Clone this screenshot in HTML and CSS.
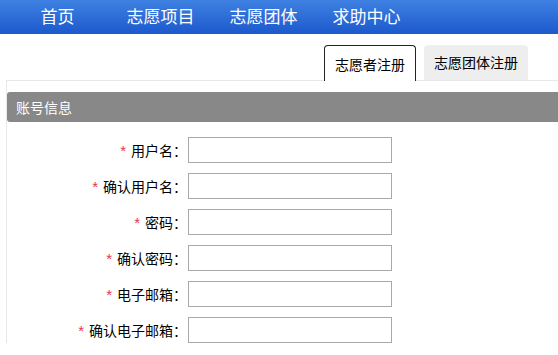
FILE: index.html
```html
<!DOCTYPE html>
<html lang="zh-CN">
<head>
<meta charset="utf-8">
<title>志愿者注册</title>
<link rel="stylesheet" href="styles.css">
</head>
<body>
<nav class="topnav">
  <a class="nav-item" href="#">首页</a>
  <a class="nav-item" href="#">志愿项目</a>
  <a class="nav-item" href="#">志愿团体</a>
  <a class="nav-item" href="#">求助中心</a>
</nav>
<div class="tabs">
  <a class="tab tab-active" href="#">志愿者注册</a>
  <a class="tab" href="#">志愿团体注册</a>
</div>
<section class="panel">
  <div class="panel-title">账号信息</div>
  <form class="form">
    <div class="row"><label class="label"><span class="req">*</span>用户名：</label><input class="field" type="text"></div>
    <div class="row"><label class="label"><span class="req">*</span>确认用户名：</label><input class="field" type="text"></div>
    <div class="row"><label class="label"><span class="req">*</span>密码：</label><input class="field" type="password"></div>
    <div class="row"><label class="label"><span class="req">*</span>确认密码：</label><input class="field" type="password"></div>
    <div class="row"><label class="label"><span class="req">*</span>电子邮箱：</label><input class="field" type="text"></div>
    <div class="row"><label class="label"><span class="req">*</span>确认电子邮箱：</label><input class="field" type="text"></div>
  </form>
</section>
</body>
</html>
```
FILE: styles.css
```css
html, body {
  margin: 0;
  padding: 0;
  background: #fff;
  overflow: hidden;
}
body {
  font-family: "Noto Sans CJK SC", "Noto Sans", sans-serif;
  color: #000;
}
.topnav {
  display: flex;
  height: 34px;
  padding-left: 6px;
  background: linear-gradient(#3f81e2, #1c59cd);
}
.nav-item {
  width: 103px;
  text-align: center;
  color: #fff;
  text-decoration: none;
  font-size: 17px;
  line-height: 31px;
}
.tabs {
  display: flex;
  gap: 8px;
  margin-top: 11px;
  padding-left: 324px;
  height: 35px;
  position: relative;
  z-index: 1;
}
.tab {
  display: block;
  box-sizing: border-box;
  height: 35px;
  padding: 0 10px;
  font-size: 14px;
  line-height: 35px;
  color: #000;
  text-decoration: none;
  background: #eee;
  border-radius: 4px 4px 0 0;
}
.tab-active {
  background: #fff;
  border: 1px solid #222;
  border-bottom: none;
  height: 36px;
  padding: 0 10px;
  line-height: 36px;
}
.panel {
  margin-left: 6px;
  border-top: 1px solid #e8e8e8;
  border-left: 1px solid #e8e8e8;
  padding-top: 11px;
}
.panel-title {
  height: 30px;
  line-height: 30px;
  background: #888;
  color: #fff;
  font-size: 14px;
  padding-left: 9px;
  border-radius: 3px 0 0 3px;
}
.form {
  display: flex;
  flex-direction: column;
  gap: 10px;
  padding-top: 15px;
}
.row {
  display: flex;
  align-items: center;
  height: 26px;
}
.label {
  width: 180px;
  text-align: right;
  font-size: 14px;
  white-space: nowrap;
}
.req {
  color: #ee3344;
  font-family: "Liberation Sans", sans-serif;
  font-size: 15px;
  margin-right: 5px;
}
.field {
  box-sizing: border-box;
  width: 204px;
  height: 26px;
  margin: 0 0 0 1px;
  border: 1px solid #aaa;
  padding: 0 4px;
  background: #fff;
}
```
